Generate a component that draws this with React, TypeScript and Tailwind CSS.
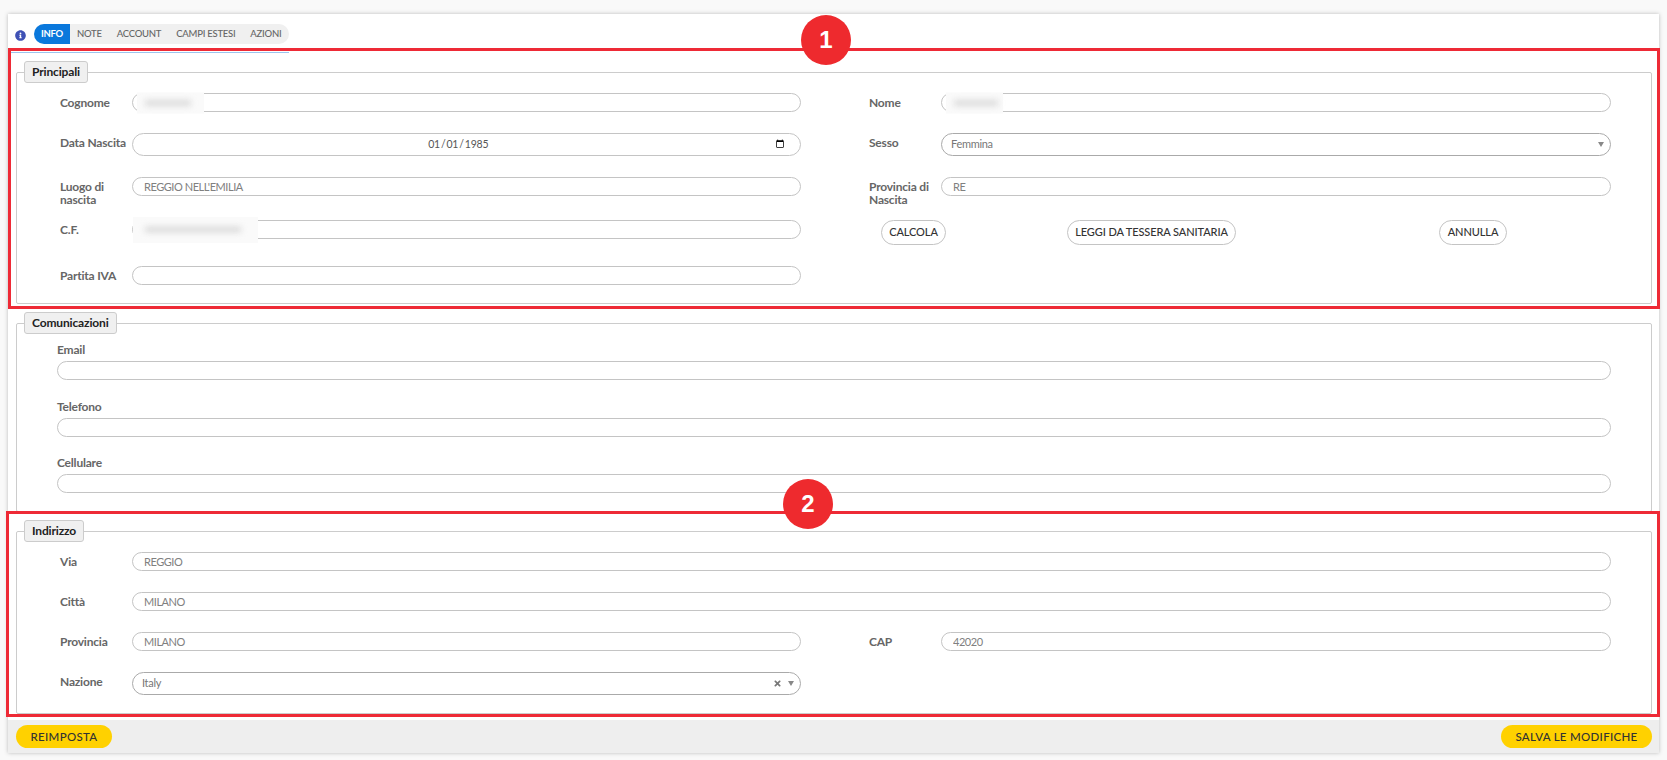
import React from "react";
import { FaInfoCircle, FaTimes } from "react-icons/fa";

const tabs = ["NOTE", "ACCOUNT", "CAMPI ESTESI", "AZIONI"];

const Legend = ({ children }: { children: React.ReactNode }) => (
  <legend className="ml-[7px] h-[22px] rounded-[3px] border border-[#ccc] bg-[#f0f0f0] px-[7px] text-[12px] leading-[20px] font-bold tracking-[-0.15px] text-[#222]">
    {children}
  </legend>
);

const TextInput = ({ value = "", width = "w-[669px]" }: { value?: string; width?: string }) => (
  <input
    readOnly
    value={value}
    className={`${width} h-[19px] shrink-0 rounded-full border border-[#c4c4c4] bg-white pl-[11px] text-[11px] tracking-[-0.45px] text-[#808080] outline-none`}
  />
);

// valori oscurati nel riferimento
const Blurred = ({ width, bar, tall }: { width: string; bar: string; tall?: boolean }) => (
  <div
    className={`absolute top-1/2 -translate-y-1/2 ${width} ${
      tall ? "left-[1px] h-[26px] pt-[10px] pl-[12px]" : "left-[5px] h-[21px] pt-[8px] pl-[8px]"
    } bg-[#fafafa]`}
  >
    <div className={`h-[5px] ${bar} bg-[#d4d4d4] blur-[3px]`} />
  </div>
);

const Field = ({
  label,
  children,
  width = "w-[809px]",
}: {
  label: React.ReactNode;
  children: React.ReactNode;
  width?: string;
}) => (
  <div className={`flex ${width} shrink-0 items-start`}>
    <label className="w-[72px] shrink-0 pt-[3px] text-[12px] leading-[13px] font-bold tracking-[-0.2px] text-[#666]">{label}</label>
    {children}
  </div>
);

const PillSelect = ({ value, width, clear }: { value: string; width: string; clear?: boolean }) => (
  <div className={`${width} flex h-[23px] shrink-0 items-center rounded-full border border-[#aaa] bg-white pr-[6px] pl-[9px] text-[11px] tracking-[-0.3px] text-[#777]`}>
    <span className="flex-1">{value}</span>
    {clear && <FaTimes className="mr-[6px] h-[9px] w-[9px] text-[#777]" />}
    <span className="h-0 w-0 border-x-[3px] border-t-[5px] border-x-transparent border-t-[#888]" />
  </div>
);

const OutlineButton = ({ children, className }: { children: React.ReactNode; className: string }) => (
  <button className={`${className} h-[25px] shrink-0 rounded-full border border-[#c4c4c4] bg-white text-[11px] font-medium tracking-[-0.1px] text-[#333]`}>
    {children}
  </button>
);

const StackedField = ({ label, mt }: { label: string; mt: string }) => (
  <div className={`${mt} pl-[40px]`}>
    <div className="text-[12px] leading-[12px] font-bold tracking-[-0.2px] text-[#666]">{label}</div>
    <TextInput width="w-[1554px] mt-[5px] block" />
  </div>
);

const YellowButton = ({ children, width }: { children: React.ReactNode; width: string }) => (
  <button className={`${width} h-[23px] rounded-full bg-[#ffd100] text-[11.5px] font-medium tracking-[0.3px] text-[#333]`}>
    {children}
  </button>
);

const Marker = ({ n, className }: { n: number; className: string }) => (
  <div
    className={`absolute flex h-[50px] w-[50px] items-center justify-center rounded-full bg-[#ee2a2e] text-[24px] font-bold text-white [font-family:'Liberation_Sans',sans-serif] ${className}`}
  >
    {n}
  </div>
);

export default function App() {
  return (
    <div className="relative h-[760px] overflow-hidden bg-[#f9f9f9] pt-[14px] pr-[8px] pl-[8px] font-['Lato',sans-serif]">
      <div className="bg-white shadow-[0_0_4px_rgba(0,0,0,0.25)]">
        <div className="flex h-[39px] w-[281px] items-start border-b border-[#9cc4ee] pt-[10px]">
          <FaInfoCircle className="mt-[6px] mr-[8px] ml-[7px] h-[11px] w-[11px] text-[#3f51b5]" />
          <div className="flex h-[20px] w-[255px] items-center overflow-hidden rounded-full bg-[#f0f0f0] text-[9.5px] font-medium tracking-[-0.25px] text-[#666]">
            <div className="flex h-full w-[36px] items-center justify-center bg-[#0a78dc] font-bold text-white">INFO</div>
            <div className="flex gap-[15px] pl-[7px]">
              {tabs.map((t) => (
                <span key={t}>{t}</span>
              ))}
            </div>
          </div>
        </div>

        <div className="pr-[7px] pl-[8px]">
          <fieldset className="mt-[8px] h-[243px] min-w-0 rounded-[2px] border border-[#ccc] p-0">
            <Legend>Principali</Legend>
            <div className="pt-[10px] pl-[43px]">
              <div className="flex h-[40px]">
                <Field label="Cognome">
                  <div className="relative flex">
                    <TextInput />
                    <Blurred width="w-[67px]" bar="w-[46px]" />
                  </div>
                </Field>
                <Field label="Nome" width="w-[742px]">
                  <div className="relative flex">
                    <TextInput width="w-[670px]" />
                    <Blurred width="w-[57px]" bar="w-[44px]" />
                  </div>
                </Field>
              </div>
              <div className="flex h-[44px]">
                <Field label="Data Nascita">
                  <input
                    type="date"
                    defaultValue="1985-01-01"
                    className="h-[23px] w-[669px] shrink-0 rounded-full border border-[#c4c4c4] bg-white pr-[13px] pl-[11px] text-center text-[10.5px] tracking-[-0.2px] text-[#555] outline-none [&::-webkit-datetime-edit]:flex [&::-webkit-datetime-edit]:justify-center"
                  />
                </Field>
                <Field label="Sesso" width="w-[742px]">
                  <PillSelect value="Femmina" width="w-[670px]" />
                </Field>
              </div>
              <div className="flex h-[43px]">
                <Field label="Luogo di nascita">
                  <TextInput value="REGGIO NELL'EMILIA" />
                </Field>
                <Field label="Provincia di Nascita" width="w-[742px]">
                  <TextInput value="RE" width="w-[670px]" />
                </Field>
              </div>
              <div className="flex h-[46px]">
                <Field label="C.F.">
                  <div className="relative flex">
                    <TextInput />
                    <Blurred width="w-[125px]" bar="w-[96px]" tall />
                  </div>
                </Field>
                <div className="flex pl-[12px]">
                  <OutlineButton className="w-[65px]">CALCOLA</OutlineButton>
                  <OutlineButton className="ml-[121px] w-[169px]">LEGGI DA TESSERA SANITARIA</OutlineButton>
                  <OutlineButton className="ml-[203px] w-[68px]">ANNULLA</OutlineButton>
                </div>
              </div>
              <div className="flex">
                <Field label="Partita IVA">
                  <TextInput />
                </Field>
              </div>
            </div>
          </fieldset>

          <fieldset className="mt-[8px] h-[200px] min-w-0 rounded-[2px] border border-[#ccc] p-0">
            <Legend>Comunicazioni</Legend>
            <StackedField label="Email" mt="mt-[10px]" />
            <StackedField label="Telefono" mt="mt-[21px]" />
            <StackedField label="Cellulare" mt="mt-[20px]" />
          </fieldset>

          <fieldset className="mt-[8px] h-[194px] min-w-0 rounded-[2px] border border-[#ccc] p-0">
            <Legend>Indirizzo</Legend>
            <div className="pt-[10px] pl-[43px]">
              <div className="flex h-[40px]">
                <Field label="Via" width="w-[1551px]">
                  <TextInput value="REGGIO" width="w-[1479px]" />
                </Field>
              </div>
              <div className="flex h-[40px]">
                <Field label="Città" width="w-[1551px]">
                  <TextInput value="MILANO" width="w-[1479px]" />
                </Field>
              </div>
              <div className="flex h-[40px]">
                <Field label="Provincia">
                  <TextInput value="MILANO" />
                </Field>
                <Field label="CAP" width="w-[742px]">
                  <TextInput value="42020" width="w-[670px]" />
                </Field>
              </div>
              <div className="flex">
                <Field label="Nazione">
                  <PillSelect value="Italy" width="w-[669px]" clear />
                </Field>
              </div>
            </div>
          </fieldset>
        </div>

        <div className="mt-[6px] flex h-[33px] items-center justify-between bg-[#eee] pr-[7px] pl-[8px]">
          <YellowButton width="w-[96px]">REIMPOSTA</YellowButton>
          <YellowButton width="w-[151px]">SALVA LE MODIFICHE</YellowButton>
        </div>
      </div>

      {/* annotazioni rosse sopra lo screenshot */}
      <div className="pointer-events-none absolute top-[48px] left-[8px] h-[261px] w-[1652px] border-[3px] border-[#ee2a36]" />
      <div className="pointer-events-none absolute top-[511px] left-[6px] h-[206px] w-[1654px] border-[3px] border-[#ee2a36]" />
      <Marker n={1} className="top-[15px] left-[801px]" />
      <Marker n={2} className="top-[479px] left-[783px]" />
    </div>
  );
}
